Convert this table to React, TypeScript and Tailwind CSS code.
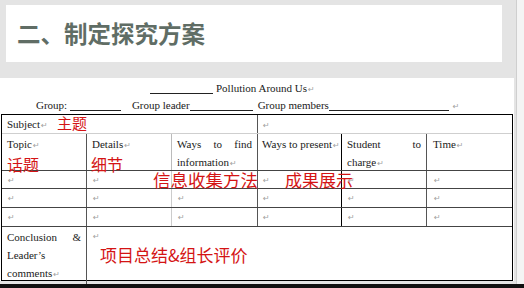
import React from "react";

const R = () => (
  <span className="text-[8px] text-[#a0a0a0] ml-[1px] align-baseline" style={{ fontFamily: "DejaVu Sans, sans-serif" }}>
    ↵
  </span>
);

const U = ({ w }: { w: number }) => (
  <span className="inline-block border-b border-[#222] translate-y-[2px]" style={{ width: w }} />
);

const serif = { fontFamily: '"Liberation Serif", "Times New Roman", serif' };
const cjk = { fontFamily: '"Noto Sans CJK SC", sans-serif' };

export default function App() {
  return (
    <div className="w-[524px] h-[288px] bg-[#e4e4e4] flex flex-col overflow-hidden">
      <div className="flex h-[284px]">
        <div className="w-[516px] flex flex-col">
          <div className="h-[78px] pt-[5px] pl-[6px]">
            <div className="w-[496px] h-[57px] bg-white flex items-center pl-[11px]">
              <span className="text-[23.5px] font-bold text-[#606d65] leading-none" style={cjk}>
                二、制定探究方案
              </span>
            </div>
          </div>
          <div className="w-[514px] h-[203px] bg-white relative text-[11px] text-[#1a1a1a]" style={serif}>
            <div className="pt-[2px]">
              <div className="h-[17px] leading-[17px] flex items-baseline pl-[150px] whitespace-pre">
                <U w={63} />
                <span className="ml-[3px]">Pollution Around Us</span>
                <R />
              </div>
              <div className="h-[17px] leading-[17px] flex items-baseline pl-[36px] whitespace-pre">
                <span>Group: </span>
                <U w={51} />
                <span className="ml-[11px]">Group leader</span>
                <U w={63} />
                <span className="ml-[5px]">Group members</span>
                <U w={120} />
                <span className="ml-[3px]"><R /></span>
              </div>
            </div>
            <div className="ml-[1px] w-[512px] h-[167px] border border-black flex flex-col">
              <div className="h-[19px] flex border-b border-[#cfcfcf]">
                <div className="w-[256px] border-r border-[#555] pl-[5px] leading-[18px]">
                  Subject<R />
                </div>
                <div className="flex-1 pl-[4px] leading-[18px]">
                  <R />
                </div>
              </div>
              <div className="h-[37px] flex border-b border-[#444]">
                <div className="w-[85px] border-r border-[#555] px-[5px] pt-[1px] leading-[18px]">
                  Topic<R />
                  <div className="text-[16px] leading-[18px] text-[#d41414]" style={cjk}>话题</div>
                </div>
                <div className="w-[85px] border-r border-[#bbb] px-[5px] pt-[1px] leading-[18px]">
                  Details<R />
                  <div className="text-[16px] leading-[18px] text-[#d41414] -ml-[1px]" style={cjk}>细节</div>
                </div>
                <div className="w-[86px] border-r border-[#555] px-[5px] pt-[1px] leading-[18px] text-justify">
                  Ways to find information<R />
                </div>
                <div className="w-[84px] border-r border-black pl-[4px] pt-[1px] leading-[18px] whitespace-nowrap">
                  Ways to present<R />
                </div>
                <div className="w-[85px] border-r border-[#555] px-[5px] pt-[1px] leading-[18px] text-justify">
                  Student to charge<R />
                </div>
                <div className="flex-1 px-[6px] pt-[1px] leading-[18px]">
                  Time<R />
                </div>
              </div>
              {[17, 19, 20].map((h, i) => (
                <div key={i} className="flex border-b border-[#444]" style={{ height: h + 1 }}>
                  <div className="w-[85px] border-r border-[#555] pl-[5px] leading-[16px]"><R /></div>
                  <div className="w-[85px] border-r border-[#ccc] pl-[5px] leading-[16px]"><R /></div>
                  <div className="w-[86px] border-r border-[#555] pl-[5px] leading-[16px]"><R /></div>
                  <div className="w-[84px] border-r border-black pl-[4px] leading-[16px]"><R /></div>
                  <div className="w-[85px] border-r border-[#555] pl-[5px] leading-[16px]"><R /></div>
                  <div className="flex-1 pl-[6px] leading-[16px]"><R /></div>
                </div>
              ))}
              <div className="flex-1 flex">
                <div className="w-[85px] border-r border-[#555] px-[5px] pt-[1px] leading-[18px] text-justify">
                  Conclusion &amp; Leader’s comments<R />
                </div>
                <div className="flex-1 pl-[5px] leading-[16px]"><R /></div>
              </div>
            </div>
            <span className="absolute left-[57px] top-[37px] text-[15px] leading-none text-[#d41414]" style={cjk}>主题</span>
            <span className="absolute left-[153px] top-[93px] text-[17.5px] leading-none text-[#d41414]" style={cjk}>信息收集方法</span>
            <span className="absolute left-[285px] top-[93px] text-[17px] leading-none text-[#d41414]" style={cjk}>成果展示</span>
            <span className="absolute left-[100px] top-[168px] text-[17px] leading-none text-[#d41414]" style={cjk}>项目总结&amp;组长评价</span>
          </div>
        </div>
        <div className="w-px bg-[#cfcfcf]" />
        <div className="flex-1 bg-[#f4f4f4]" />
      </div>
      <div className="h-[4px] bg-[#111]" />
    </div>
  );
}
